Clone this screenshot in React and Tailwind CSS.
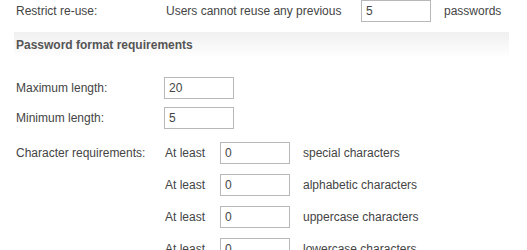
export default function App() {
  const inp = "box-border w-[70px] h-[22px] border border-[#b8b8b8] bg-white pl-[4px] text-[12px] text-[#444] outline-none";
  const rows = ["special characters", "alphabetic characters", "uppercase characters", "lowercase characters"];
  return (
    <div className="w-[527px] h-[250px] overflow-hidden bg-white text-[12px] text-[#444]" style={{ fontFamily: '"Liberation Sans", Arial, sans-serif' }}>
      <div className="flex items-center h-[22px]">
        <span className="ml-[16px] w-[150px]">Restrict re-use:</span>
        <span className="w-[195px]">Users cannot reuse any previous</span>
        <input className={inp} defaultValue="5" readOnly />
        <span className="ml-[13px]">passwords</span>
      </div>
      <div className="ml-[14px] mt-[10px] w-[495px] h-[26px] flex items-center pl-[2px] font-bold text-[#555] bg-gradient-to-b from-[#f0f0f0] to-white">
        Password format requirements
      </div>
      <div className="mt-[19px] flex items-center h-[22px]">
        <span className="ml-[16px] w-[148px]">Maximum length:</span>
        <input className={inp} defaultValue="20" readOnly />
      </div>
      <div className="mt-[8px] flex items-center h-[22px]">
        <span className="ml-[16px] w-[148px]">Minimum length:</span>
        <input className={inp} defaultValue="5" readOnly />
      </div>
      <div className="mt-[13px] flex flex-col gap-[10px]">
        {rows.map((r, i) => (
          <div key={r} className="flex items-center h-[22px]">
            <span className="ml-[16px] w-[149px]">{i === 0 ? "Character requirements:" : ""}</span>
            <span className="w-[55px]">At least</span>
            <input className={inp} defaultValue="0" readOnly />
            <span className="ml-[13px]">{r}</span>
          </div>
        ))}
      </div>
    </div>
  );
}
